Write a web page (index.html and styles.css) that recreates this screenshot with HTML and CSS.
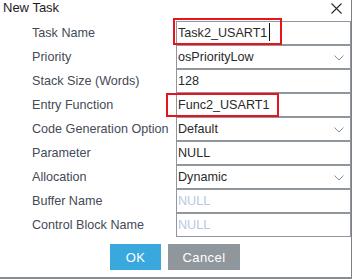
FILE: index.html
```html
<!DOCTYPE html>
<html lang="en">
<head>
    <meta charset="UTF-8">
    <title>New Task</title>
    <link rel="stylesheet" href="styles.css">
</head>
<body>
    <div class="dialog">
        <div class="title-bar">
            <span class="title">New Task</span>
            <svg class="close" width="11" height="11" viewBox="0 0 11 11">
                <path d="M0.5 0.5 L10.5 10.5 M10.5 0.5 L0.5 10.5" stroke="#2a2a2a" stroke-width="1.1" fill="none"/>
            </svg>
        </div>

        <div class="form-grid">
            <label>Task Name</label>
            <div class="field">Task2_USART1<span class="caret"></span></div>

            <label>Priority</label>
            <div class="field select">osPriorityLow
                <svg class="chevron" width="10" height="6" viewBox="0 0 10 6"><path d="M0.5 0.5 L5 5 L9.5 0.5" stroke="#8a8e92" fill="none"/></svg>
            </div>

            <label>Stack Size (Words)</label>
            <div class="field">128</div>

            <label>Entry Function</label>
            <div class="field">Func2_USART1</div>

            <label>Code Generation Option</label>
            <div class="field select">Default
                <svg class="chevron" width="10" height="6" viewBox="0 0 10 6"><path d="M0.5 0.5 L5 5 L9.5 0.5" stroke="#8a8e92" fill="none"/></svg>
            </div>

            <label>Parameter</label>
            <div class="field">NULL</div>

            <label>Allocation</label>
            <div class="field select">Dynamic
                <svg class="chevron" width="10" height="6" viewBox="0 0 10 6"><path d="M0.5 0.5 L5 5 L9.5 0.5" stroke="#8a8e92" fill="none"/></svg>
            </div>

            <label>Buffer Name</label>
            <div class="field placeholder">NULL</div>

            <label>Control Block Name</label>
            <div class="field placeholder">NULL</div>
        </div>

        <div class="buttons">
            <button class="btn ok">OK</button>
            <button class="btn cancel">Cancel</button>
        </div>

        <!-- annotation boxes -->
        <div class="mark mark-name"></div>
        <div class="mark mark-entry"></div>
    </div>
</body>
</html>
```

FILE: styles.css
```css
body {
    margin: 0;
    background: #ffffff;
    font-family: "Liberation Sans", Arial, sans-serif;
    font-size: 12.6px;
}
.dialog {
    position: relative;
    width: 352px;
    height: 279px;
    box-sizing: border-box;
    background: #ffffff;
    border-right: 1px solid #7d8185;
    border-bottom: 2px solid #8a8c8e;
}
.title-bar {
    height: 21px;
    display: flex;
    justify-content: space-between;
    align-items: flex-start;
}
.title {
    margin-left: 3px;
    font-size: 13px;
    line-height: 16px;
    color: #1c1c1c;
}
.close {
    margin-top: 3px;
    margin-right: 9px;
}
.form-grid {
    display: grid;
    grid-template-columns: 176px 175px;
    grid-auto-rows: 24px;
}
.form-grid label {
    padding-left: 32px;
    line-height: 24px;
    color: #444a56;
    white-space: nowrap;
}
.field {
    position: relative;
    box-sizing: border-box;
    height: 24px;
    border: 1px solid #8f969c;
    padding-left: 1px;
    line-height: 22px;
    color: #2a2a2a;
}
.field.placeholder {
    color: #b7c9e2;
}
.caret {
    display: inline-block;
    width: 1px;
    height: 18px;
    margin-left: 2px;
    background: #111111;
    vertical-align: -4px;
}
.chevron {
    position: absolute;
    right: 6px;
    top: 9px;
}
.buttons {
    display: flex;
    justify-content: center;
    gap: 7px;
    margin-top: 7px;
    padding-right: 1px;
}
.btn {
    height: 26px;
    border: none;
    padding: 0;
    color: #ffffff;
    font-family: "Liberation Sans", Arial, sans-serif;
    font-size: 13px;
    letter-spacing: 0.4px;
}
.ok {
    width: 51px;
    background: #39a8dc;
}
.cancel {
    width: 72px;
    background: #8f979d;
}
.mark {
    position: absolute;
    border: 2px solid #e8141c;
}
.mark-name {
    left: 173px;
    top: 18px;
    width: 105px;
    height: 23px;
}
.mark-entry {
    left: 166px;
    top: 93px;
    width: 109px;
    height: 20px;
}
```
